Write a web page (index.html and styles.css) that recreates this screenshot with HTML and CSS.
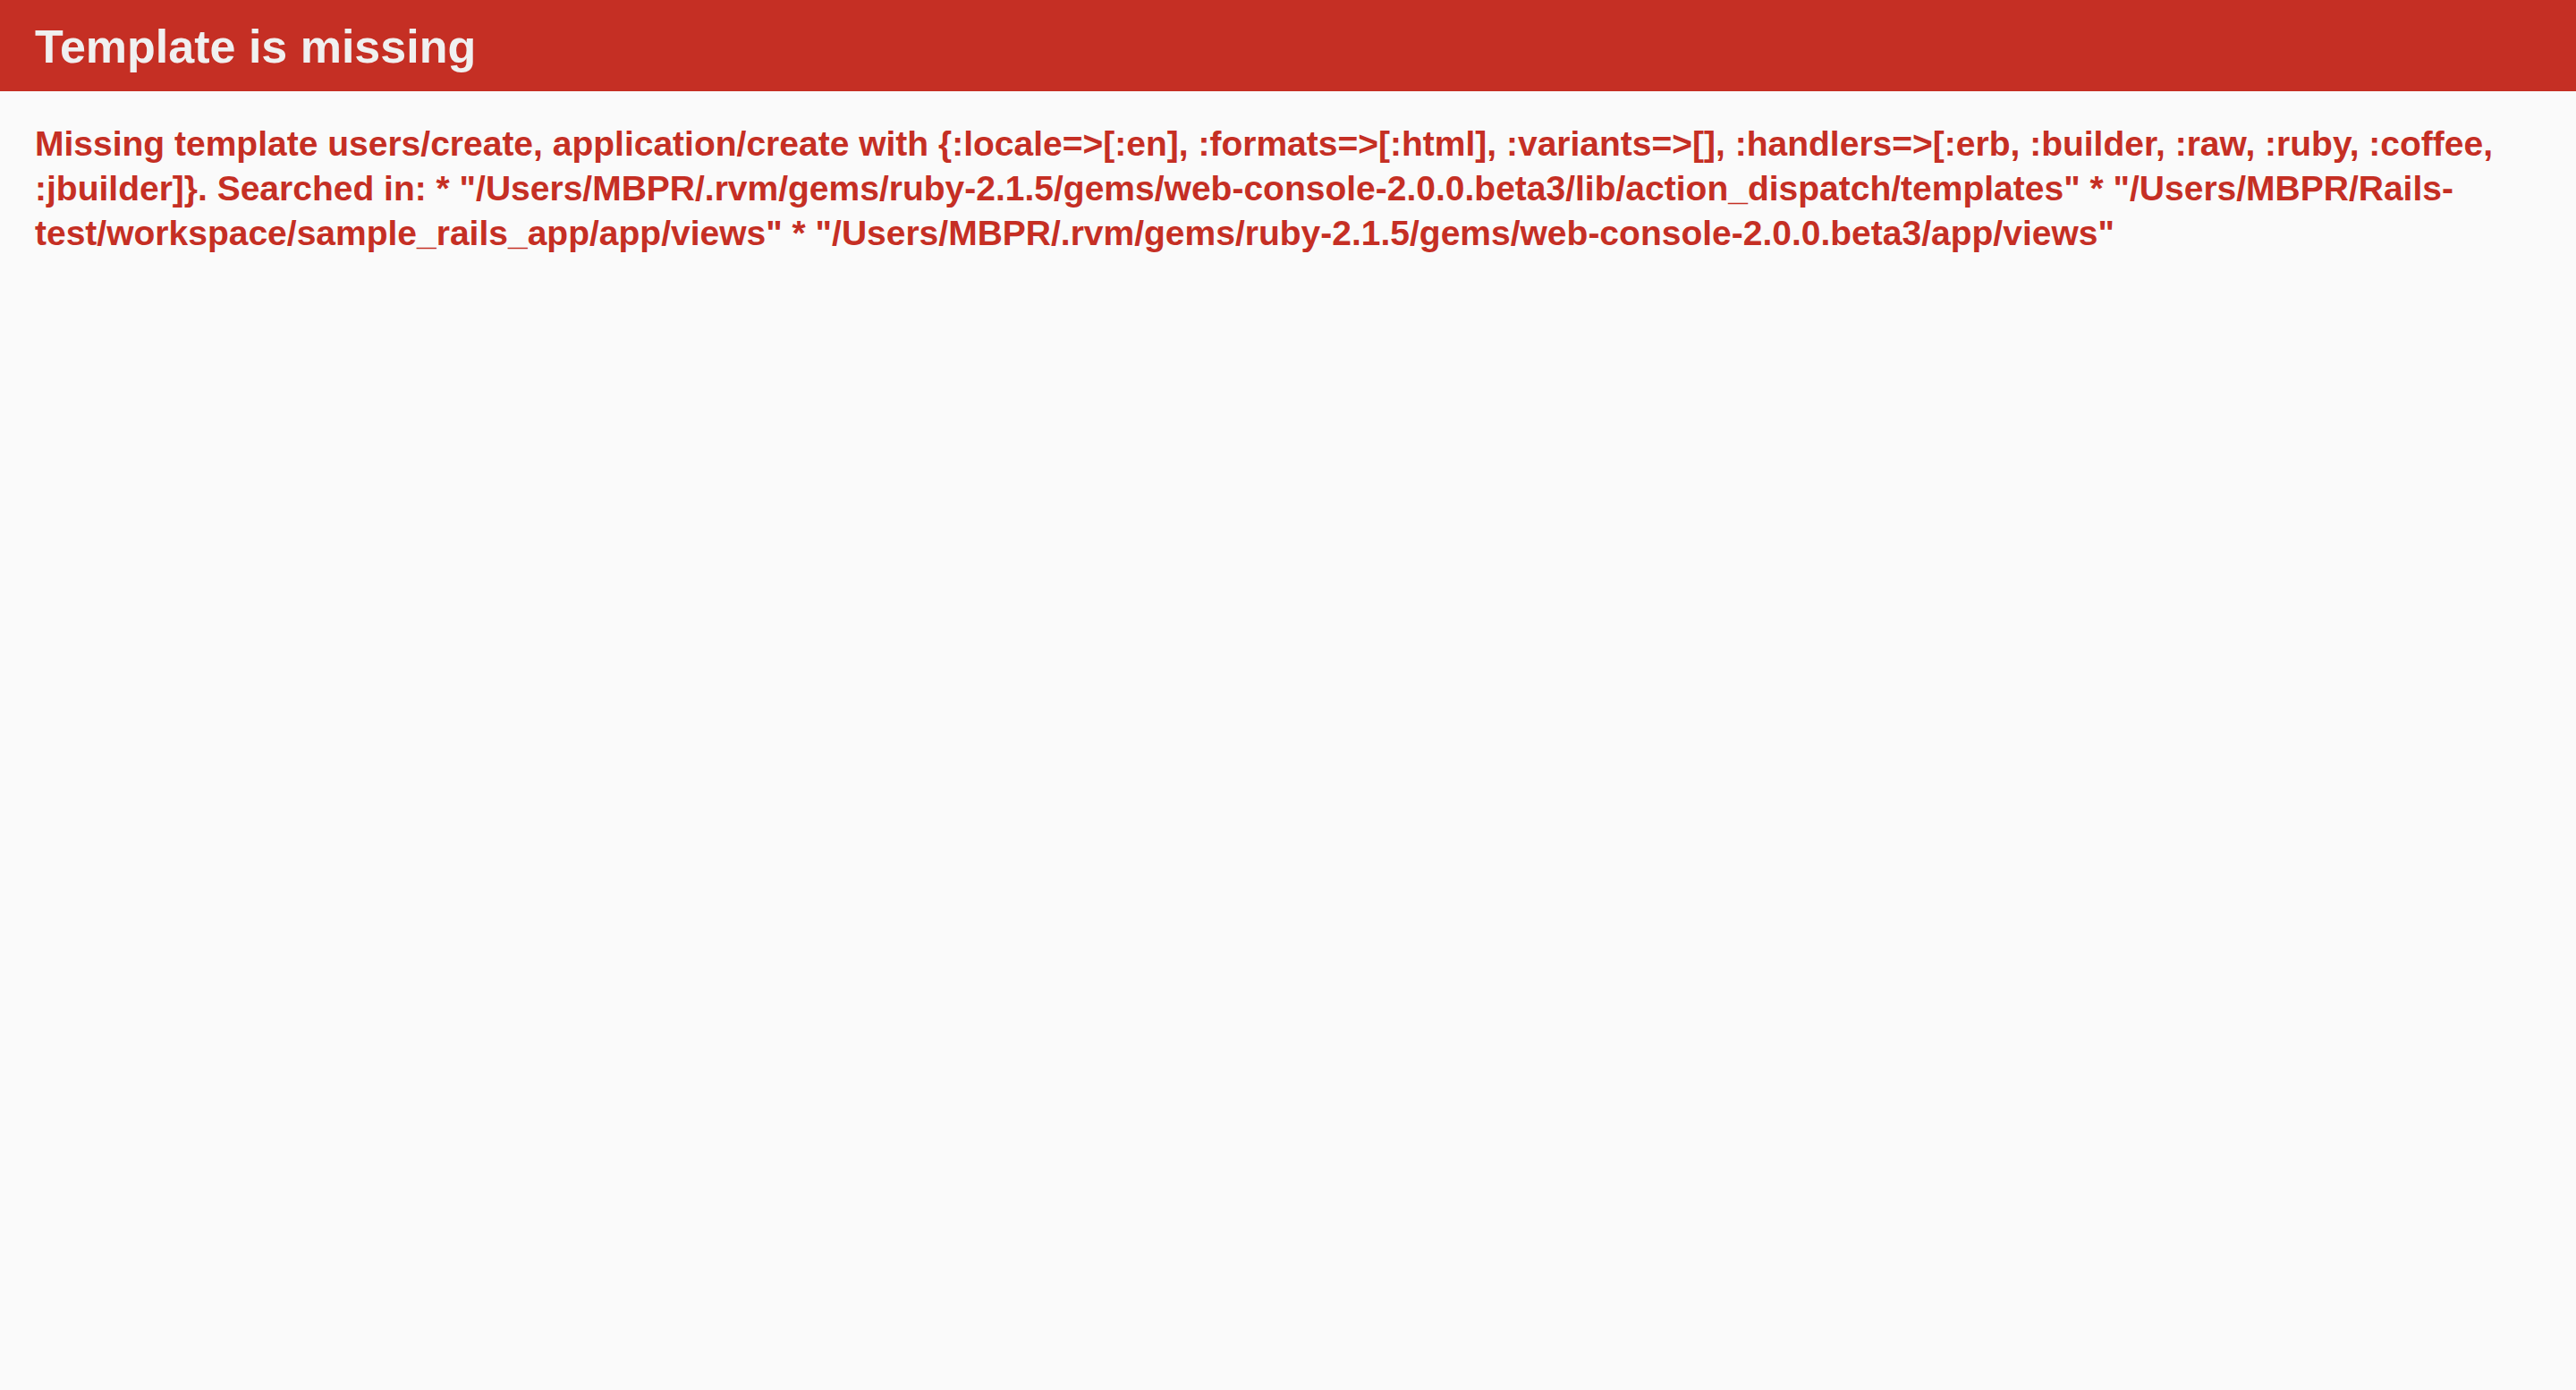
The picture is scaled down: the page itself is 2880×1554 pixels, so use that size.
FILE: index.html
```html
<!DOCTYPE html>
<html lang="en">
<head>
<meta charset="utf-8">
<title>Template is missing</title>
<link rel="stylesheet" href="styles.css">
</head>
<body>
<header class="page-header">
  <h1 class="page-title">Template is missing</h1>
</header>
<div class="container">
  <h2 class="message">Missing template users/create, application/create with {:locale=&gt;[:en], :formats=&gt;[:html], :variants=&gt;[], :handlers=&gt;[:erb, :builder, :raw, :ruby, :coffee, :jbuilder]}. Searched in: * "/Users/MBPR/.rvm/gems/ruby-2.1.5/gems/web-console-2.0.0.beta3/lib/action_dispatch/templates" * "/Users/MBPR/Rails-test/workspace/sample_rails_app/app/views" * "/Users/MBPR/.rvm/gems/ruby-2.1.5/gems/web-console-2.0.0.beta3/app/views"</h2>
</div>
</body>
</html>
```

FILE: styles.css
```css
html, body {
  margin: 0;
  padding: 0;
}
body {
  background-color: #FAFAFA;
  color: #333;
  font-family: "Liberation Sans", Arial, Helvetica, sans-serif;
  font-size: 26px;
  line-height: 36px;
  min-height: 100vh;
}
.page-header {
  color: #F0F0F0;
  background: #C52F24;
  padding: 13px 39px;
}
.page-title {
  margin: 11px 0 8px;
  font-size: 52px;
  line-height: 57px;
  font-weight: bold;
}
.container {
  box-sizing: border-box;
  width: 100%;
  padding: 0 39px;
}
.message {
  color: #C52F24;
  font-size: 39px;
  line-height: 50px;
  font-weight: bold;
  margin: 34px 0;
}
```
